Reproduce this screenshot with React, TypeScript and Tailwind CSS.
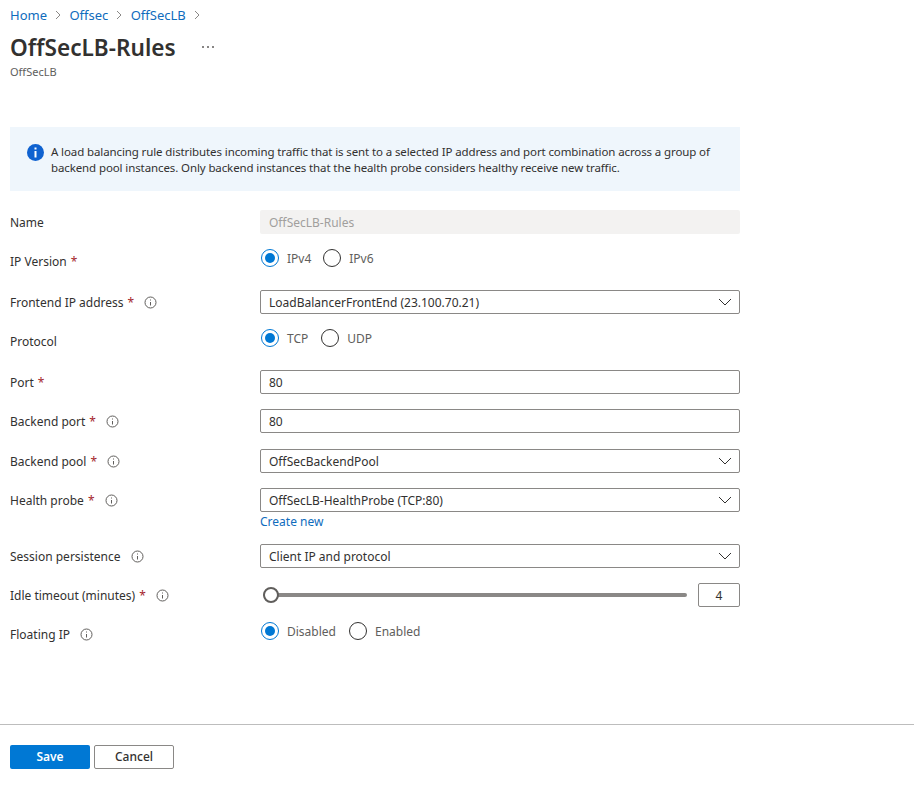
import React from "react";

function Info() {
  return (
    <svg width="13" height="13" viewBox="0 0 13 13" className="shrink-0 text-[#605e5c]" fill="none" stroke="currentColor">
      <circle cx="6.5" cy="6.5" r="5.5" strokeWidth="1" />
      <path d="M6.5 6v3.5" strokeWidth="1" />
      <path d="M6.5 3.5v1" strokeWidth="1" />
    </svg>
  );
}

function Chevron() {
  return (
    <svg width="14" height="8" viewBox="0 0 14 8" fill="none" stroke="#323130" strokeWidth="1" className="shrink-0">
      <path d="M1 1l6 6 6-6" />
    </svg>
  );
}

function Crumb() {
  return (
    <svg width="6" height="10" viewBox="0 0 6 10" fill="none" stroke="#8a8886" className="mx-[8.2px]">
      <path d="M1 1l4 4-4 4" />
    </svg>
  );
}

function Label({ text, req, info }: { text: string; req?: boolean; info?: boolean }) {
  return (
    <div className="w-[250px] shrink-0 flex items-center text-[#323130]">
      <span className="pt-[2px]">{text}</span>
      {req && <span className="ml-1 pt-[2px] text-[#a4262c]">*</span>}
      {info && <span className="ml-[10px] flex"><Info /></span>}
    </div>
  );
}

function Box({ children, select }: { children: React.ReactNode; select?: boolean }) {
  return (
    <div className="w-[480px] h-6 border border-[#8a8886] rounded-[2px] flex items-center justify-between pl-2 pr-[7px] text-[#323130]">
      <span className="pt-[2px]">{children}</span>
      {select && <Chevron />}
    </div>
  );
}

function Radio({ label, on, gap }: { label: string; on?: boolean; gap: string }) {
  return (
    <div className={"flex items-center " + gap}>
      <span className={"w-[18px] h-[18px] rounded-full border flex items-center justify-center " + (on ? "border-[#0078d4]" : "border-[#323130]")}>
        {on && <span className="w-[10px] h-[10px] rounded-full bg-[#0078d4]" />}
      </span>
      <span className="ml-2 pt-[2px] text-[#605e5c]">{label}</span>
    </div>
  );
}

function Radios({ children }: { children: React.ReactNode }) {
  return <div className="flex items-start h-[18px]">{children}</div>;
}

export default function App() {
  return (
    <div className="h-[787px] w-[914px] flex flex-col bg-white text-[12px] leading-4 overflow-hidden" style={{ fontFamily: '"Noto Sans", "Open Sans", sans-serif' }}>
      <div className="flex-1 pl-[10px] pr-[174px]">
        <nav className="flex items-center h-4 mt-[7px] text-[#0f6cbd] text-[13px]">
          <span>Home</span>
          <Crumb />
          <span>Offsec</span>
          <Crumb />
          <span>OffSecLB</span>
          <Crumb />
        </nav>
        <div className="flex items-center mt-[9px] h-8">
          <h1 className="text-[22.6px] leading-8 font-semibold text-[#323130]">OffSecLB-Rules</h1>
          <span className="ml-[26px] flex gap-[3px] mb-[2px]">
            <i className="w-[2px] h-[2px] bg-[#605e5c] rounded-full" />
            <i className="w-[2px] h-[2px] bg-[#605e5c] rounded-full" />
            <i className="w-[2px] h-[2px] bg-[#605e5c] rounded-full" />
          </span>
        </div>
        <div className="text-[11px] leading-4 text-[#605e5c]">OffSecLB</div>

        <div className="mt-[47px] h-16 bg-[#eff6fc] flex pl-[17px] pt-[17px] text-[#323130]">
          <svg width="17" height="17" viewBox="0 0 17 17" className="shrink-0 mr-[7px]">
            <circle cx="8.5" cy="8.5" r="8.5" fill="#0f62d0" />
            <rect x="7.5" y="7" width="2" height="6.5" fill="#fff" />
            <rect x="7.5" y="3.5" width="2" height="2" fill="#fff" />
          </svg>
          <p className="text-[11.5px] tracking-[-0.11px] whitespace-nowrap">
            A load balancing rule distributes incoming traffic that is sent to a selected IP address and port combination across a group of
            <br />
            backend pool instances. Only backend instances that the health probe considers healthy receive new traffic.
          </p>
        </div>

        <div className="mt-[19px] flex items-center h-6">
          <Label text="Name" />
          <div className="w-[480px] h-6 bg-[#f3f2f1] rounded-[2px] flex items-center pl-[9px] text-[#a19f9d]">
            <span className="pt-[2px]">OffSecLB-Rules</span>
          </div>
        </div>

        <div className="mt-[15px] flex items-start h-6">
          <div className="h-6 flex items-center"><Label text="IP Version" req /></div>
          <Radios>
            <Radio label="IPv4" on gap="ml-[1px]" />
            <Radio label="IPv6" gap="ml-[12px]" />
          </Radios>
        </div>

        <div className="mt-[17px] flex items-center">
          <Label text="Frontend IP address" req info />
          <Box select>LoadBalancerFrontEnd (23.100.70.21)</Box>
        </div>

        <div className="mt-[15px] flex items-start h-6">
          <div className="h-6 flex items-center"><Label text="Protocol" /></div>
          <Radios>
            <Radio label="TCP" on gap="ml-[1px]" />
            <Radio label="UDP" gap="ml-[13px]" />
          </Radios>
        </div>

        <div className="mt-[17px] flex items-center">
          <Label text="Port" req />
          <Box>80</Box>
        </div>

        <div className="mt-[15px] flex items-center">
          <Label text="Backend port" req info />
          <Box>80</Box>
        </div>

        <div className="mt-4 flex items-center">
          <Label text="Backend pool" req info />
          <Box select>OffSecBackendPool</Box>
        </div>

        <div className="mt-[15px] flex items-center">
          <Label text="Health probe" req info />
          <Box select>OffSecLB-HealthProbe (TCP:80)</Box>
        </div>
        <div className="ml-[250px] mt-[1px] pt-[1px] h-4 text-[#0f6cbd]">Create new</div>

        <div className="mt-[15px] flex items-center">
          <Label text="Session persistence" info />
          <Box select>Client IP and protocol</Box>
        </div>

        <div className="mt-[15px] flex items-center">
          <Label text="Idle timeout (minutes)" req info />
          <div className="w-[480px] flex items-center">
            <div className="relative flex-1 mr-[11px] ml-[3px] h-1 bg-[#8a8886] rounded-[2px]">
              <span className="absolute left-0 -top-[6px] w-4 h-4 rounded-full bg-white border-2 border-[#605e5c]" />
            </div>
            <div className="w-[42px] h-6 border border-[#8a8886] rounded-[2px] flex items-center justify-center text-[#323130]">
              <span className="pt-[2px]">4</span>
            </div>
          </div>
        </div>

        <div className="mt-[15px] flex items-start h-6">
          <div className="h-6 flex items-center"><Label text="Floating IP" info /></div>
          <Radios>
            <Radio label="Disabled" on gap="ml-[1px]" />
            <Radio label="Enabled" gap="ml-[13px]" />
          </Radios>
        </div>
      </div>

      <div className="h-[63px] border-t border-[#bdbdbd] pl-[10px] pt-[20px] flex gap-1">
        <button className="w-20 h-6 rounded-[2px] bg-[#0078d4] text-white font-semibold">Save</button>
        <button className="w-20 h-6 rounded-[2px] border border-[#8a8886] text-[#323130] font-medium">Cancel</button>
      </div>
    </div>
  );
}
